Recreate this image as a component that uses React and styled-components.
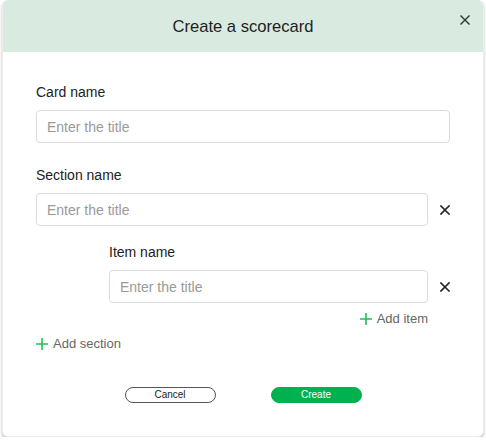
import React from "react";
import styled, { createGlobalStyle } from "styled-components";

const Global = createGlobalStyle`
  html, body { margin: 0; padding: 0; background: #ffffff; }
  body { font-family: "Liberation Sans", Arial, sans-serif; }
  * { box-sizing: border-box; }
`;

const Card = styled.div`
  margin: 0 2px;
  width: 482px;
  height: 437px;
  background: #fff;
  border-radius: 6px;
  border: 1px solid #ececec;
  border-top: none;
  box-shadow: 0 2px 3px rgba(0, 0, 0, 0.25);
  overflow: hidden;
  display: flex;
  flex-direction: column;
`;

const Header = styled.div`
  position: relative;
  height: 52px;
  background: #d9ebe0;
  display: flex;
  align-items: center;
  justify-content: center;
`;

const Title = styled.h1`
  margin: 0;
  font-size: 16.6px;
  font-weight: 400;
  color: #222;
  padding-top: 2px;
`;

const CloseBtn = styled.button`
  position: absolute;
  top: 13px;
  right: 11px;
  width: 14px;
  height: 14px;
  padding: 0;
  border: none;
  background: none;
  display: flex;
  align-items: center;
  justify-content: center;
`;

const Body = styled.div`
  padding: 32px 33px 0 33px;
  display: flex;
  flex-direction: column;
`;

const Field = styled.div`
  display: flex;
  flex-direction: column;
  margin-left: ${(p) => p.$indent || 0}px;
  margin-top: ${(p) => p.$top || 0}px;
`;

const Label = styled.label`
  font-size: 14px;
  line-height: 17px;
  color: #222;
  margin-bottom: 9px;
`;

const Row = styled.div`
  display: flex;
  align-items: center;
`;

const Input = styled.input`
  flex: 1;
  min-width: 0;
  height: 33px;
  border: 1px solid #dcdcdc;
  border-radius: 4px;
  padding: 0 10px;
  font-family: "Liberation Sans", Arial, sans-serif;
  font-size: 14px;
  color: #222;
  outline: none;
  &::placeholder { color: #9a9a9a; }
`;

const RemoveBtn = styled.button`
  width: 22px;
  padding: 0 0 0 12px;
  border: none;
  background: none;
  display: flex;
  align-items: center;
  justify-content: flex-start;
  flex-shrink: 0;
`;

const AddRow = styled.div`
  display: flex;
  justify-content: ${(p) => (p.$right ? "flex-end" : "flex-start")};
  padding-right: ${(p) => (p.$right ? 22 : 0)}px;
  margin-top: ${(p) => p.$top}px;
`;

const AddBtn = styled.button`
  display: flex;
  align-items: center;
  gap: 5px;
  padding: 0;
  border: none;
  background: none;
  font-family: "Liberation Sans", Arial, sans-serif;
  font-size: 13px;
  line-height: 15px;
  color: #666;
`;

const Footer = styled.div`
  display: flex;
  justify-content: center;
  gap: 55px;
  margin-top: 36px;
`;

const Btn = styled.button`
  width: 91px;
  height: 16px;
  border-radius: 8px;
  font-family: "Liberation Sans", Arial, sans-serif;
  font-size: 10px;
  line-height: 14px;
  padding: 0;
  border: 1px solid ${(p) => (p.$primary ? "#00b14f" : "#555")};
  background: ${(p) => (p.$primary ? "#00b14f" : "#fff")};
  color: ${(p) => (p.$primary ? "#fff" : "#222")};
`;

const XIcon = ({ size = 10, color = "#222", w = 1.6 }) => (
  <svg width={size} height={size} viewBox="0 0 10 10">
    <path d="M1 1 L9 9 M9 1 L1 9" stroke={color} strokeWidth={w} strokeLinecap="square" />
  </svg>
);

const PlusIcon = () => (
  <svg width="12" height="12" viewBox="0 0 12 12">
    <path d="M6 0 V12 M0 6 H12" stroke="#1fbf5a" strokeWidth="1.6" />
  </svg>
);

export default function App() {
  return (
    <>
      <Global />
      <Card>
        <Header>
          <Title>Create a scorecard</Title>
          <CloseBtn aria-label="Close">
            <XIcon size={10} color="#333" w={1.4} />
          </CloseBtn>
        </Header>
        <Body>
          <Field>
            <Label>Card name</Label>
            <Row>
              <Input placeholder="Enter the title" />
            </Row>
          </Field>
          <Field $top={24}>
            <Label>Section name</Label>
            <Row>
              <Input placeholder="Enter the title" />
              <RemoveBtn aria-label="Remove section">
                <XIcon size={10} />
              </RemoveBtn>
            </Row>
          </Field>
          <Field $indent={73} $top={18}>
            <Label>Item name</Label>
            <Row>
              <Input placeholder="Enter the title" />
              <RemoveBtn aria-label="Remove item">
                <XIcon size={10} />
              </RemoveBtn>
            </Row>
          </Field>
          <AddRow $right $top={8}>
            <AddBtn>
              <PlusIcon />
              Add item
            </AddBtn>
          </AddRow>
          <AddRow $top={10}>
            <AddBtn>
              <PlusIcon />
              Add section
            </AddBtn>
          </AddRow>
          <Footer>
            <Btn>Cancel</Btn>
            <Btn $primary>Create</Btn>
          </Footer>
        </Body>
      </Card>
    </>
  );
}
